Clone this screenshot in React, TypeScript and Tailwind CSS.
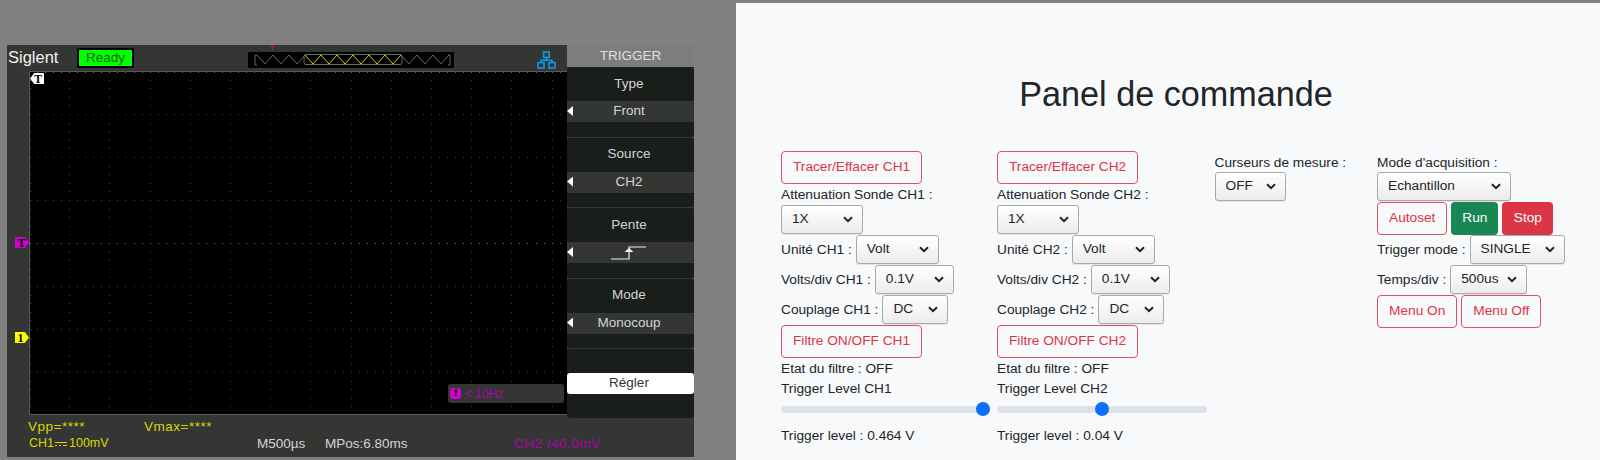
const sans = { fontFamily: '"Liberation Sans", Arial, sans-serif' }

function Chevron() {
  return (
    <svg className="pointer-events-none absolute right-[10px] top-[11px]" width="10" height="7" viewBox="0 0 10 7" fill="none">
      <path d="M1 1.2 5 5.2 9 1.2" stroke="#222" strokeWidth="2" />
    </svg>
  )
}

function Select({ value, width, options }: { value: string; width: string; options?: string[] }) {
  return (
    <div className={`relative h-[29px] shrink-0 ${width}`}>
      <select
        defaultValue={value}
        className="h-full w-full appearance-none rounded-[3px] border border-[#a9a9a9] bg-gradient-to-b from-white to-[#ececec] pl-[10px] text-[13.7px] text-[#212529] shadow-[0_1px_0_rgba(0,0,0,0.08)]"
      >
        {(options ?? [value]).map((o) => (
          <option key={o}>{o}</option>
        ))}
      </select>
      <Chevron />
    </div>
  )
}

function OutlineButton({ children, className = '' }: { children: React.ReactNode; className?: string }) {
  return (
    <button className={`h-[33px] shrink-0 rounded-[4px] border border-[#e0505e] px-[11px] text-[13.7px] text-[#dc3545] ${className}`}>
      {children}
    </button>
  )
}

function Row({ label, value, width }: { label: string; value: string; width: string }) {
  return (
    <div className="flex h-[30px] items-start gap-[4px]">
      <span className="leading-[29px]">{label}</span>
      <Select value={value} width={width} />
    </div>
  )
}

function Channel({ n, colW, slider, level, sliderW }: { n: number; colW: string; slider: number; level: string; sliderW: string }) {
  return (
    <div className={`flex shrink-0 flex-col items-start ${colW}`}>
      <OutlineButton>Tracer/Effacer CH{n}</OutlineButton>
      <div className="h-[21px] leading-[21px]">Attenuation Sonde CH{n} :</div>
      <div className="h-[30px]">
        <Select value="1X" width="w-[82px]" />
      </div>
      <Row label={`Unité CH${n} :`} value="Volt" width="w-[83px]" />
      <Row label={`Volts/div CH${n} :`} value="0.1V" width="w-[79px]" />
      <Row label={`Couplage CH${n} :`} value="DC" width="w-[66px]" />
      <OutlineButton>Filtre ON/OFF CH{n}</OutlineButton>
      <div className="h-[21px] leading-[21px]">Etat du filtre : OFF</div>
      <div className="h-[20px] leading-[20px]">Trigger Level CH{n}</div>
      <input
        type="range"
        min={0}
        max={100}
        defaultValue={slider}
        className={`mt-[2px] h-[16px] appearance-none bg-transparent ${sliderW} [&::-webkit-slider-runnable-track]:h-[7px] [&::-webkit-slider-runnable-track]:rounded-full [&::-webkit-slider-runnable-track]:bg-[#dee2e6] [&::-webkit-slider-thumb]:mt-[-3.5px] [&::-webkit-slider-thumb]:h-[14px] [&::-webkit-slider-thumb]:w-[14px] [&::-webkit-slider-thumb]:appearance-none [&::-webkit-slider-thumb]:rounded-full [&::-webkit-slider-thumb]:bg-[#0d6efd]`}
      />
      <div className="mt-[8px] h-[21px] leading-[21px]">Trigger level : {level}</div>
    </div>
  )
}

function ControlPanel() {
  return (
    <div className="h-[457px] flex-1 overflow-hidden bg-[#f8f9fa] pl-[45px] pr-[29px] text-[13.7px] text-[#212529]" style={sans}>
      <h1 className="mt-[66px] h-[50px] text-center text-[34.2px] leading-[50px]">Panel de commande</h1>
      <div className="mt-[32px] flex items-start">
        <Channel n={1} colW="w-[216px]" slider={100} level="0.464 V" sliderW="w-[209px]" />
        <Channel n={2} colW="w-[217.5px]" slider={50} level="0.04 V" sliderW="w-[210px]" />
        <div className="flex w-[162.5px] shrink-0 flex-col items-start">
          <div className="h-[21px] pt-[0.5px] leading-[21px]">Curseurs de mesure :</div>
          <Select value="OFF" width="w-[71px]" />
        </div>
        <div className="flex flex-col items-start">
          <div className="h-[21px] pt-[0.5px] leading-[21px]">Mode d'acquisition :</div>
          <div className="h-[30px]">
            <Select value="Echantillon" width="w-[134px]" />
          </div>
          <div className="flex gap-[4px]">
            <OutlineButton>Autoset</OutlineButton>
            <button className="h-[33px] w-[47px] rounded-[4px] bg-[#198754] text-white">Run</button>
            <button className="h-[33px] w-[51px] rounded-[4px] bg-[#dc3545] text-white">Stop</button>
          </div>
          <Row label="Trigger mode :" value="SINGLE" width="w-[95px]" />
          <Row label="Temps/div :" value="500us" width="w-[77px]" />
          <div className="flex gap-[4px]">
            <OutlineButton>Menu On</OutlineButton>
            <OutlineButton>Menu Off</OutlineButton>
          </div>
        </div>
      </div>
    </div>
  )
}

function Grid() {
  const xs = Array.from({ length: 14 }, (_, i) => i * 40.2)
  const ys = Array.from({ length: 9 }, (_, i) => i * 43)
  const dots: { x: number; y: number; c: string }[] = []
  xs.forEach((x) => {
    for (let y = 0; y <= 344; y += 8.6) dots.push({ x, y, c: '#444' })
  })
  ys.forEach((y) => {
    for (let x = 0; x <= 537; x += 8.04) dots.push({ x, y, c: y === 172 ? '#6e6e6e' : '#444' })
  })
  for (let x = 0; x <= 537; x += 8.04) {
    dots.push({ x, y: 1, c: '#666' })
  }
  for (let y = 0; y <= 344; y += 8.6) {
    dots.push({ x: 1, y, c: '#666' })
  }
  return (
    <svg className="absolute inset-0" width="538" height="344">
      <path d="M0 .5H538M.5 0V344M0 343.5H538" stroke="#5a5a5a" />
      {dots.map((d, i) => (
        <rect key={i} x={Math.round(d.x)} y={Math.round(d.y)} width="1" height="1" fill={d.c} />
      ))}
    </svg>
  )
}

function Overview() {
  const zig = (from: number, to: number) => {
    const pts: string[] = []
    let up = true
    for (let x = from; x <= to; x += 8) {
      pts.push(`${x},${up ? 55 : 64}`)
      up = !up
    }
    return pts.join(' ')
  }
  return (
    <svg className="absolute left-[240px] top-0" width="220" height="26" viewBox="247 45 220 26">
      <path d="M269 46h5M271.5 46v4" stroke="#d01818" strokeWidth="1.2" />
      <rect x="247" y="52" width="206" height="16" fill="#000" />
      <path d="M256 55h-2v10h2M447 55h2v10h-2" stroke="#666" fill="none" />
      <polyline points={zig(256, 304)} fill="none" stroke="#666" />
      <polyline points={zig(304, 400)} fill="none" stroke="#d8d000" />
      <polyline points={zig(400, 448)} fill="none" stroke="#666" />
      <rect x="303" y="54.5" width="98" height="10" rx="2" fill="none" stroke="#6a6a6a" />
    </svg>
  )
}

function NetIcon() {
  return (
    <svg className="absolute right-[11px] top-[6px]" width="19" height="18" viewBox="0 0 19 18" fill="none" stroke="#0c9cea" strokeWidth="1.6">
      <rect x="6.6" y="1" width="5.6" height="5.4" />
      <rect x="1" y="11.6" width="6" height="5.4" />
      <rect x="12" y="11.6" width="6" height="5.4" />
      <path d="M9.4 6.4V9M4 11.6V9.2h11v2.4" />
    </svg>
  )
}

function Marker({ label, className }: { label: string; className: string }) {
  return (
    <div
      className={`absolute left-[8px] flex h-[11px] w-[14px] items-center pl-[2.5px] font-['Liberation_Serif'] text-[12px] font-bold leading-none text-black [clip-path:polygon(0_0,70%_0,100%_50%,70%_100%,0_100%)] ${className}`}
    >
      {label}
    </div>
  )
}

function MenuItem({ label, value, children }: { label: string; value?: string; children?: React.ReactNode }) {
  return (
    <div className="mb-[1px] flex h-[69.5px] flex-col rounded-[3px] bg-[#1a1e1b]">
      <div className="flex h-[34px] items-center justify-center pr-[3px]">{label}</div>
      <div className="relative flex h-[21px] items-center justify-center bg-[#343634] pr-[3px]">
        <div className="absolute left-0 top-[5px] h-[10px] w-[6px] bg-white [clip-path:polygon(100%_0,100%_100%,0_50%)]" />
        {value}
        {children}
      </div>
    </div>
  )
}

function Scope() {
  return (
    <div className="flex h-[412px] w-[687px] flex-col bg-[#343634] text-[#d4d4d4]" style={sans}>
      <div className="flex h-[373px]">
        <div className="flex w-[560px] flex-col">
          <div className="relative h-[26px] shrink-0">
            <span className="absolute left-[1px] top-[2px] text-[16.5px] leading-[20px] text-[#f0f0f0]">Siglent</span>
            <span className="absolute left-[70px] top-[3px] flex h-[20px] w-[57px] items-center justify-center border-2 border-black bg-[#00ff00] text-[13.5px] text-[#0a6a0a]">
              Ready
            </span>
            <div className="absolute left-[1px] top-0">
              <Overview />
            </div>
            <NetIcon />
          </div>
          <div className="flex">
            <div className="relative h-[344px] w-[22px] shrink-0">
              <Marker label="T" className="top-[166px] bg-[#d000d0]" />
              <Marker label="1" className="top-[261px] bg-[#ffff00]" />
            </div>
            <div className="relative h-[344px] w-[538px] bg-black">
              <Grid />
              <div className="absolute left-[1px] top-[2px] flex h-[11px] w-[14px] items-center justify-end pr-[2px] font-['Liberation_Serif'] text-[12px] font-bold leading-none text-black bg-white [clip-path:polygon(30%_0,100%_0,100%_100%,30%_100%,0_50%)]">
                T
              </div>
              <div className="absolute left-[419px] top-[313px] flex h-[19px] w-[116px] items-center gap-[4px] rounded-[3px] bg-[#343634] pl-[2px] text-[12px] text-[#b000b0]">
                <span className="flex h-[11px] w-[11px] items-center justify-center rounded-[3px] bg-[#d000d0] text-[9px] font-bold text-black">f</span>
                &lt; 10Hz
              </div>
            </div>
          </div>
        </div>
        <div className="flex w-[127px] flex-col text-[13.5px]">
          <div className="flex h-[22px] items-center justify-center bg-[#7c7e7c] text-[#e0e0e0]">TRIGGER</div>
          <MenuItem label="Type" value="Front" />
          <MenuItem label="Source" value="CH2" />
          <MenuItem label="Pente">
            <svg width="36" height="14" viewBox="0 0 36 14" fill="none" stroke="#eee" strokeWidth="1.2">
              <path d="M0 13h18V1h17" />
              <path d="M13.5 6 18 2l4.5 4z" fill="#eee" stroke="none" />
            </svg>
          </MenuItem>
          <MenuItem label="Mode" value="Monocoup" />
          <div className="flex flex-1 flex-col rounded-[3px] bg-[#1a1e1b] pt-[24px]">
            <div className="flex h-[21px] items-center justify-center rounded-[3px] bg-white pr-[3px] text-[#333]">Régler</div>
          </div>
        </div>
      </div>
      <div className="flex h-[39px] flex-col text-[13.5px] leading-[17px]">
        <div className="flex pl-[21px] tracking-[0.5px] text-[#d8d800]">
          <span className="w-[116px]">Vpp=****</span>
          <span>Vmax=****</span>
        </div>
        <div className="flex pl-[22px]">
          <span className="flex w-[228px] items-center text-[12.5px] text-[#d8d800]">
            CH1
            <svg className="mx-[1px]" width="12" height="6" viewBox="0 0 12 6" stroke="#d8d800">
              <path d="M0 1.5h12M0 4.5h2M4 4.5h2M8 4.5h4" />
            </svg>
            <span className="ml-[1px]">100mV</span>
          </span>
          <span className="w-[68px]">M500µs</span>
          <span className="w-[189px]">MPos:6.80ms</span>
          <span className="tracking-[0.5px] text-[#b000b0]">CH2 /40.0mV</span>
        </div>
      </div>
    </div>
  )
}

export default function App() {
  return (
    <div className="flex h-[460px] w-[1600px] items-end overflow-hidden bg-[#808080]">
      <div className="h-[457px] w-[736px] shrink-0 pl-[7px] pt-[42px]">
        <Scope />
      </div>
      <ControlPanel />
    </div>
  )
}
